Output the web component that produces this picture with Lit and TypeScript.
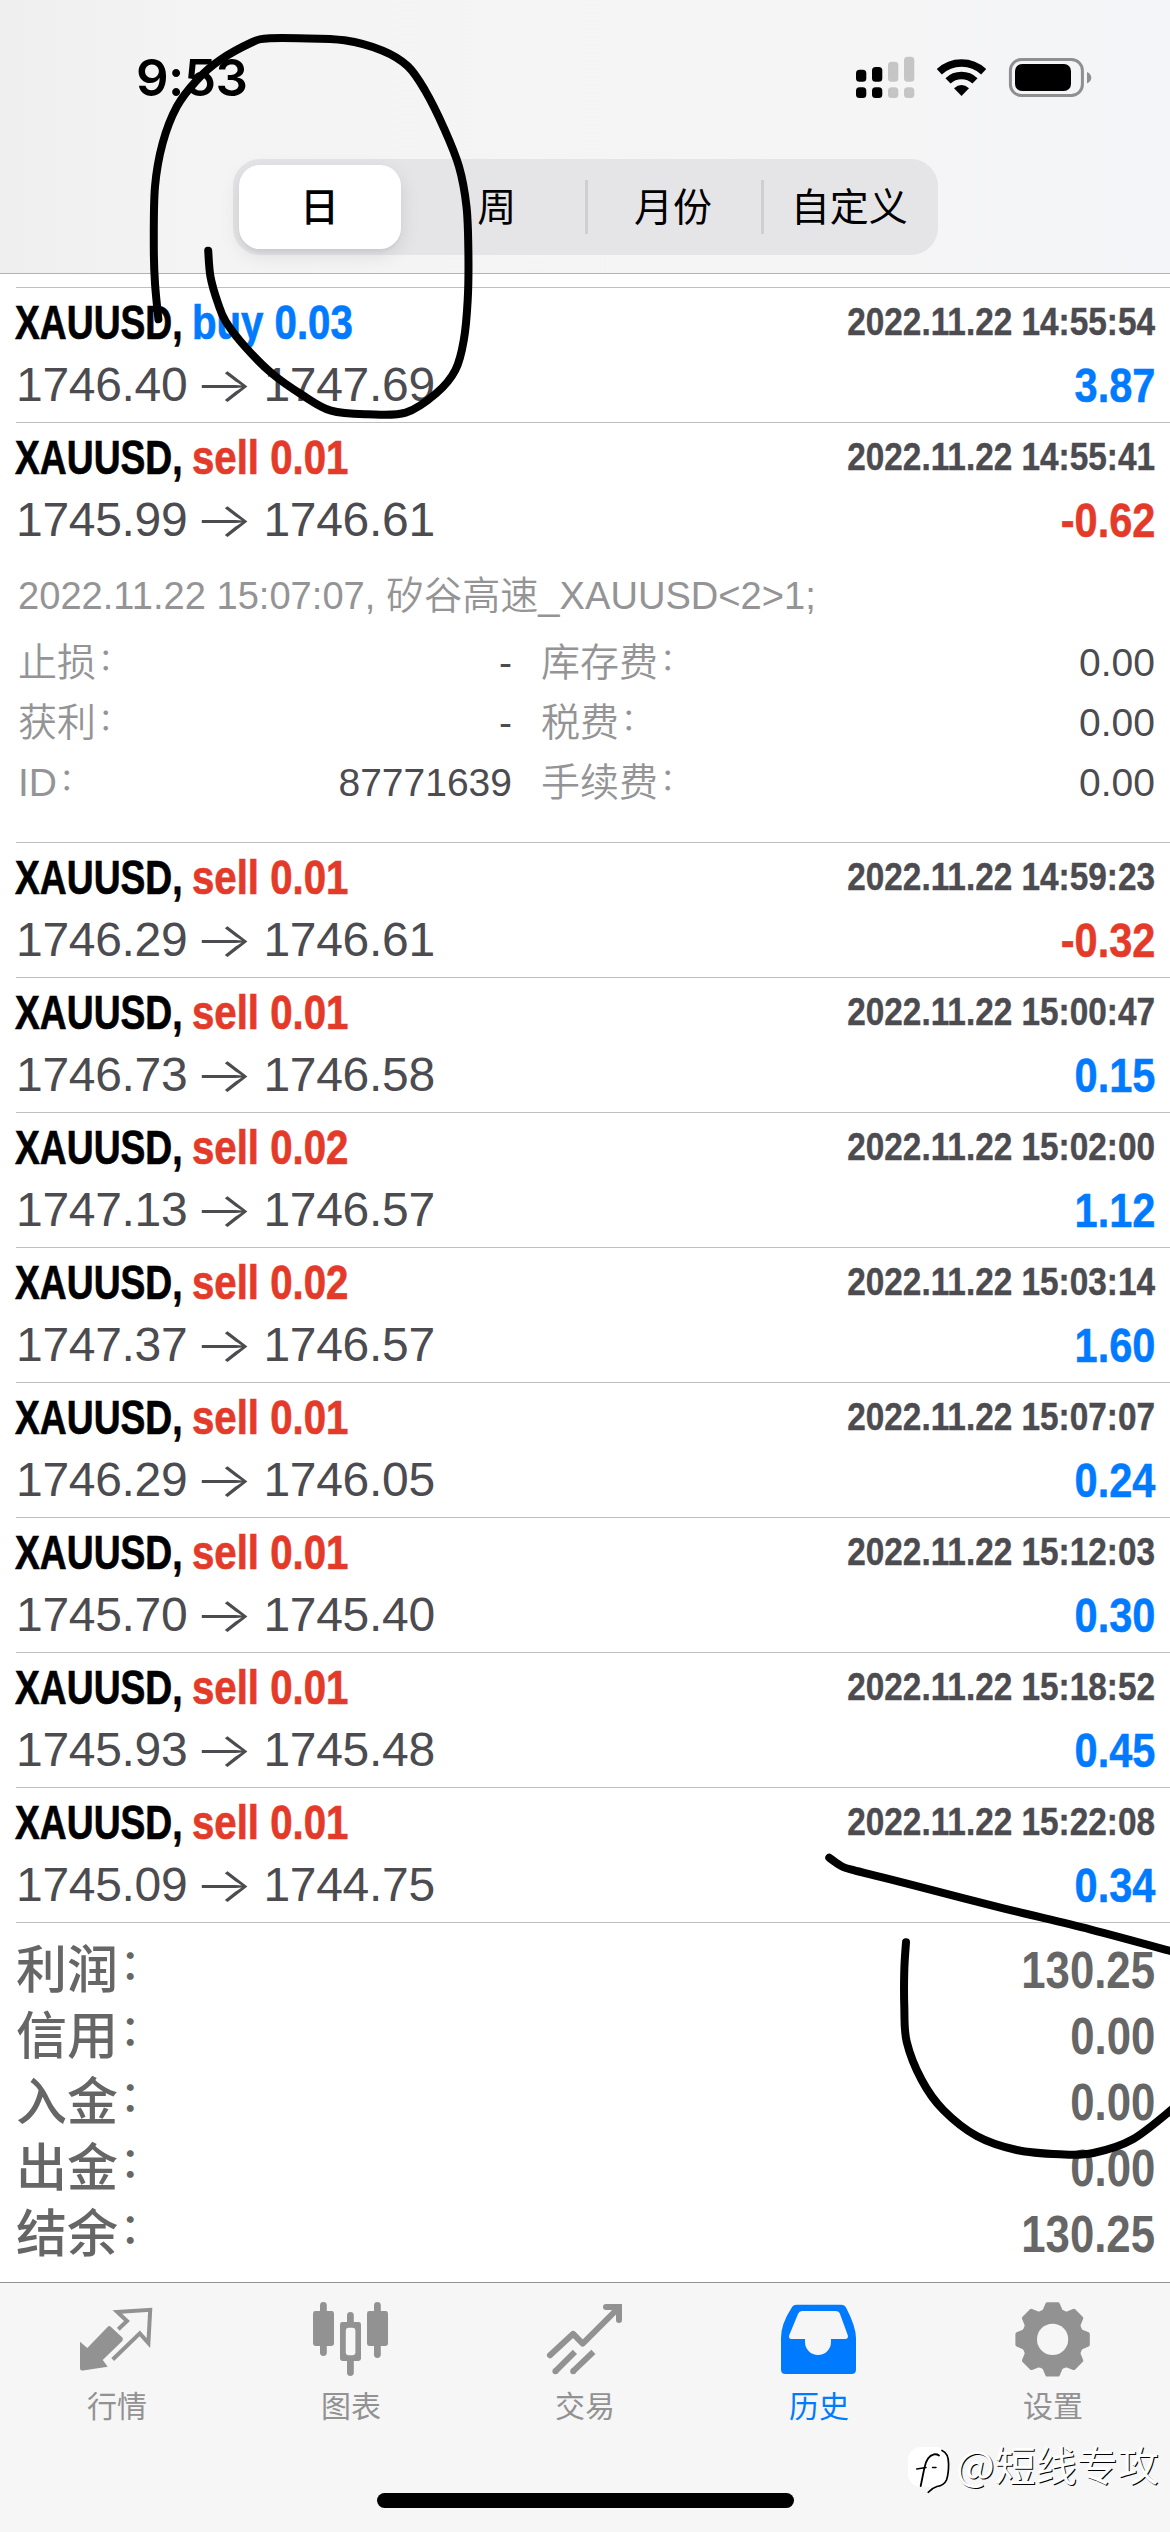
import { LitElement, html, svg, css } from "lit";
import { customElement, property } from "lit/decorators.js";

interface Deal {
  side: "buy" | "sell";
  volume: string;
  open: string;
  close: string;
  time: string;
  profit: string;
  details?: boolean;
}

const DEALS: Deal[] = [
  { side: "buy", volume: "0.03", open: "1746.40", close: "1747.69", time: "2022.11.22 14:55:54", profit: "3.87" },
  { side: "sell", volume: "0.01", open: "1745.99", close: "1746.61", time: "2022.11.22 14:55:41", profit: "-0.62", details: true },
  { side: "sell", volume: "0.01", open: "1746.29", close: "1746.61", time: "2022.11.22 14:59:23", profit: "-0.32" },
  { side: "sell", volume: "0.01", open: "1746.73", close: "1746.58", time: "2022.11.22 15:00:47", profit: "0.15" },
  { side: "sell", volume: "0.02", open: "1747.13", close: "1746.57", time: "2022.11.22 15:02:00", profit: "1.12" },
  { side: "sell", volume: "0.02", open: "1747.37", close: "1746.57", time: "2022.11.22 15:03:14", profit: "1.60" },
  { side: "sell", volume: "0.01", open: "1746.29", close: "1746.05", time: "2022.11.22 15:07:07", profit: "0.24" },
  { side: "sell", volume: "0.01", open: "1745.70", close: "1745.40", time: "2022.11.22 15:12:03", profit: "0.30" },
  { side: "sell", volume: "0.01", open: "1745.93", close: "1745.48", time: "2022.11.22 15:18:52", profit: "0.45" },
  { side: "sell", volume: "0.01", open: "1745.09", close: "1744.75", time: "2022.11.22 15:22:08", profit: "0.34" },
];

const TOTALS: [string, string][] = [
  ["利润", "130.25"],
  ["信用", "0.00"],
  ["入金", "0.00"],
  ["出金", "0.00"],
  ["结余", "130.25"],
];

type Point = [number, number];

/* Smooth path through all points (Catmull-Rom converted to cubic Béziers). */
function smooth(points: Point[]): string {
  let d = `M${points[0][0]} ${points[0][1]}`;
  for (let i = 0; i < points.length - 1; i++) {
    const p0 = points[Math.max(0, i - 1)];
    const p1 = points[i];
    const p2 = points[i + 1];
    const p3 = points[Math.min(points.length - 1, i + 2)];
    const c1 = [p1[0] + (p2[0] - p0[0]) / 6, p1[1] + (p2[1] - p0[1]) / 6];
    const c2 = [p2[0] - (p3[0] - p1[0]) / 6, p2[1] - (p3[1] - p1[1]) / 6];
    d += `C${c1[0].toFixed(1)} ${c1[1].toFixed(1)} ${c2[0].toFixed(1)} ${c2[1].toFixed(1)} ${p2[0]} ${p2[1]}`;
  }
  return d;
}

const MARKS: Point[][] = [
  [
    [158.4, 319.3], [155, 283.3], [153.8, 246.7], [155, 186.7], [162.6, 143.3], [176.8, 106.7], [197, 80],
    [220, 60], [252.6, 42], [267, 38.5], [298.5, 38.3], [344.4, 40.3], [382.7, 50.7], [407.6, 66], [424.8, 90],
    [444, 128.3], [459, 166.7], [466.5, 206.7], [468.4, 253.3], [467.7, 300], [463.8, 340], [455.4, 370],
    [436.3, 393.3], [405.7, 412.7], [367.4, 414.3], [331, 410.7], [302.3, 395], [271.7, 373.3], [245, 346.7],
    [225.8, 321.7], [218, 303.3], [210.5, 276.7], [208.2, 250.7],
  ],
  [[829.3, 1857.7], [840, 1865.2], [851.7, 1869.7], [910, 1884.3], [1003.3, 1908.3], [1090, 1929.3], [1176, 1952.5]],
  [
    [906, 1942.3], [904.3, 1970], [904.3, 2006.7], [906.7, 2041.7], [921.7, 2080], [943.3, 2110], [976.7, 2136],
    [1016.7, 2150], [1060, 2154.3], [1093.3, 2153], [1133.3, 2139], [1175, 2107],
  ],
];

function gear(): string {
  const out: string[] = [];
  const at = (deg: number, r: number) => {
    const a = (deg * Math.PI) / 180;
    return `${(39.6 + r * Math.sin(a)).toFixed(2)} ${(39.4 - r * Math.cos(a)).toFixed(2)}`;
  };
  for (let t = 0; t < 8; t++) {
    const c = t * 45;
    out.push(at(c - 20, 29), at(c - 16, 29.6), at(c - 8.5, 35.6), at(c + 8.5, 35.6), at(c + 16, 29.6), at(c + 20, 29));
  }
  return `M${out.join("L")}Z`;
}

const ICONS: Record<string, unknown> = {
  quotes: svg`
    <path d="M41.3 29.3 50 21 40.3 12 73.2 9.8 71.4 43 62.8 33.3 35.7 59.5" fill="none" stroke="currentColor" stroke-width="4" />
    <path d="M3 41.7 10.3 48 30.6 27Q32.3 25 34 27L45.3 37.6Q46.6 39.3 45.3 41L25.7 60 30.7 66.7 6 70.6Q3 70.8 3 68Z" fill="currentColor" />`,
  chart: svg`
    <g fill="currentColor">
      <rect x="9" y="2" width="6.8" height="54" rx="3.4" /><rect x="2" y="11" width="21" height="35" rx="2.4" />
      <rect x="36" y="12" width="6.8" height="64" rx="3.4" /><rect x="29" y="22" width="21" height="39" rx="2.4" />
      <rect x="63" y="2" width="6.8" height="56" rx="3.4" /><rect x="56" y="11" width="21" height="35" rx="2.4" />
    </g>
    <rect x="34.8" y="27.8" width="9.6" height="27.4" rx="3" fill="#f6f6f6" />`,
  trade: svg`
    <g fill="none" stroke="currentColor" stroke-width="6">
      <path d="M5 55.3 28.2 33.8 37.7 43.6 74 7.3" stroke-linecap="round" stroke-linejoin="round" />
      <path d="M61 7.1H74V20" stroke-linecap="round" stroke-linejoin="miter" />
      <path d="M10.3 71.3 29.9 51.9M28 71.3 48.4 51.9" />
    </g>
    <circle cx="10.4" cy="71.2" r="3" fill="currentColor" /><circle cx="28.2" cy="71.2" r="3" fill="currentColor" />`,
  history: svg`
    <path fill-rule="evenodd" fill="currentColor" d="M17.5 4.7H62Q65.500 4.700 67.300 8Q77 27 77 38V69.500Q77 74 72.500 74H6.500Q2 74 2 69.500V38Q2 24 12.500 8Q14.200 4.700 17.500 4.700ZM23.500 11Q20.300 11 19 14L10.300 35Q9.200 39 12.500 39H26V42A13 13 0 0 0 52 42V39H66Q69.800 39 68.700 35L61 14Q60 11 56.500 11Z" />`,
  settings: svg`
    <path d=${gear()} fill="currentColor" stroke="currentColor" stroke-width="4" stroke-linejoin="round" />
    <circle cx="39.600" cy="39.400" r="15.600" fill="#f6f6f6" />`,
};

@customElement("deal-row")
export class DealRow extends LitElement {
  @property({ attribute: false }) deal!: Deal;

  static styles = css`
    :host {
      display: block;
      box-sizing: border-box;
      margin-left: 16px;
      border-bottom: 1px solid #bfbfc2;
      height: 135px;
    }
    :host([expanded]) {
      height: 420px;
    }
    .head {
      box-sizing: border-box;
      height: 134px;
      padding: 9px 15px 0 0;
    }
    .line {
      display: flex;
      justify-content: space-between;
      align-items: flex-start;
      white-space: nowrap;
    }
    .line.second {
      margin-top: 11px;
    }
    .title {
      display: flex;
      font-size: 49px;
      line-height: 50px;
      font-weight: 700;
      -webkit-text-stroke: 0.7px currentColor;
    }
    .symbol {
      width: 177px;
      margin-left: -1px;
      color: #000;
      transform: scaleX(0.76);
      transform-origin: left;
    }
    .action {
      transform: scaleX(0.82);
      transform-origin: left;
    }
    .time {
      font-size: 39px;
      line-height: 49px;
      font-weight: 700;
      color: #4b4b50;
      transform: scaleX(0.855);
      transform-origin: right;
      -webkit-text-stroke: 0.4px currentColor;
    }
    .prices {
      display: flex;
      font-size: 48px;
      line-height: 54px;
      letter-spacing: -0.3px;
      color: #4b4b50;
    }
    .arrow {
      width: 77px;
      margin-right: -1px;
      text-align: center;
      font-family: "Inter", sans-serif;
      font-weight: 300;
      transform: translateX(-2px) scaleX(1.3);
    }
    .profit {
      font-size: 48px;
      line-height: 55px;
      font-weight: 700;
      transform: scaleX(0.865);
      transform-origin: right;
      -webkit-text-stroke: 0.5px currentColor;
    }
    .blue {
      color: #007aff;
    }
    .red {
      color: #e43a29;
    }
    .note {
      margin: 9px 0 0 2px;
      font-size: 39px;
      line-height: 60px;
      color: #949496;
      font-weight: 350;
      white-space: nowrap;
      transform: scaleX(0.977);
      transform-origin: left;
    }
    .grid {
      display: grid;
      grid-template-columns: 494px 614px;
      column-gap: 29px;
      margin: 7px 0 0 2px;
      font-size: 39px;
      line-height: 60px;
    }
    .pair {
      display: flex;
      justify-content: space-between;
    }
    .key {
      color: #949496;
      font-weight: 350;
    }
    .value {
      color: #4b4b50;
    }
    .colon {
      position: relative;
      top: -6px;
      margin-left: 2px;
      font-size: 31px;
      line-height: 1;
    }
  `;

  private pair(key: string, value: string) {
    return html`<div class="pair">
      <span class="key">${key}<span class="colon">：</span></span><span class="value">${value}</span>
    </div>`;
  }

  render() {
    const d = this.deal;
    return html`
      <div class="head">
        <div class="line">
          <div class="title">
            <span class="symbol">XAUUSD,</span>
            <span class="action ${d.side === "buy" ? "blue" : "red"}">${d.side} ${d.volume}</span>
          </div>
          <span class="time">${d.time}</span>
        </div>
        <div class="line second">
          <div class="prices"><span>${d.open}</span><span class="arrow">→</span><span>${d.close}</span></div>
          <span class="profit ${d.profit.startsWith("-") ? "red" : "blue"}">${d.profit}</span>
        </div>
      </div>
      ${d.details
        ? html`
            <div class="note">2022.11.22 15:07:07, 矽谷高速_XAUUSD&lt;2&gt;1;</div>
            <div class="grid">
              ${this.pair("止损", "-")}${this.pair("库存费", "0.00")}
              ${this.pair("获利", "-")}${this.pair("税费", "0.00")}
              ${this.pair("ID", "87771639")}${this.pair("手续费", "0.00")}
            </div>
          `
        : ""}
    `;
  }
}

@customElement("app-root")
export class AppRoot extends LitElement {
  static styles = css`
    :host {
      display: block;
      position: relative;
      width: 1170px;
      height: 2532px;
      overflow: hidden;
      background: #fff;
      font-family: "Liberation Sans", "Noto Sans CJK SC", sans-serif;
    }
    .screen {
      display: flex;
      flex-direction: column;
      height: 100%;
    }
    .header {
      box-sizing: border-box;
      height: 274px;
      border-bottom: 1px solid #b2b2b4;
      background: linear-gradient(90deg, #efeff0 0, #f4f4f5 200px, #f5f5f5 800px, #f4f5f8 1170px);
      display: flex;
      flex-direction: column;
      align-items: center;
    }
    .status {
      align-self: stretch;
      box-sizing: border-box;
      height: 159px;
      padding: 48px 78px 0 136px;
      display: flex;
      justify-content: space-between;
      align-items: flex-start;
    }
    .clock {
      font-family: "Inter", sans-serif;
      font-weight: 600;
      font-size: 51px;
      line-height: 60px;
      letter-spacing: -0.5px;
    }
    .indicators {
      display: block;
      width: 240px;
      height: 60px;
    }
    .segments {
      box-sizing: border-box;
      width: 705px;
      height: 96px;
      border-radius: 27px;
      background: #e5e5e7;
      display: grid;
      grid-template-columns: repeat(4, 1fr);
      align-items: center;
      font-size: 39px;
      line-height: 85px;
      text-align: center;
      color: #000;
    }
    .segment.selected {
      margin: 0 8px 0 6px;
      height: 84px;
      border-radius: 21px;
      background: #fff;
      font-weight: 500;
      box-shadow: 0 6px 20px rgba(0, 0, 0, 0.1), 0 3px 3px rgba(0, 0, 0, 0.04);
    }
    .segment.ruled {
      background: linear-gradient(#cfcfd2, #cfcfd2) left center / 3px 54px no-repeat;
    }
    .list {
      flex: none;
      padding-top: 13px;
    }
    .top-rule {
      height: 1px;
      margin-left: 16px;
      background: #bfbfc2;
    }
    .totals {
      flex: 1;
      padding: 15px 15px 0 16px;
      font-size: 51px;
      line-height: 66px;
      font-weight: 700;
      color: #666;
    }
    .total {
      display: flex;
      justify-content: space-between;
    }
    .label {
      font-weight: 500;
    }
    .amount {
      transform: scaleX(0.857);
      transform-origin: right;
    }
    .colon {
      position: relative;
      top: -9px;
      margin-left: 2px;
      font-size: 41px;
      line-height: 1;
    }
    .tabbar {
      box-sizing: border-box;
      height: 250px;
      border-top: 1px solid #939395;
      background: #f6f6f6;
      display: flex;
      flex-direction: column;
      align-items: center;
    }
    .tabs {
      align-self: stretch;
      height: 210px;
      display: grid;
      grid-template-columns: repeat(5, 1fr);
    }
    .tab {
      display: flex;
      flex-direction: column;
      align-items: center;
      padding-top: 17px;
      color: #929292;
      font-size: 30px;
      line-height: 40px;
    }
    .tab.active {
      color: #007aff;
    }
    .tab svg {
      display: block;
      width: 80px;
      height: 80px;
      margin-bottom: 7px;
    }
    .home {
      width: 417px;
      height: 15px;
      border-radius: 8px;
      background: #000;
    }
    .marks {
      position: absolute;
      inset: 0;
      width: 1170px;
      height: 2532px;
      fill: none;
      stroke: #000;
      stroke-width: 8;
      stroke-linecap: round;
      stroke-linejoin: round;
      pointer-events: none;
    }
    .watermark {
      position: absolute;
      left: 906px;
      top: 2433px;
      display: flex;
      align-items: flex-start;
      font-size: 41px;
      line-height: 60px;
      color: #fff;
      white-space: nowrap;
      font-family: "Noto Sans CJK SC", sans-serif;
      font-weight: 400;
      text-shadow: 1px 1px 0 #000;
    }
    .watermark svg {
      width: 50px;
      height: 60px;
      margin-top: 3px;
    }
  `;

  private tab(icon: string, label: string, active = false) {
    return html`<div class="tab ${active ? "active" : ""}">
      <svg viewBox="0 0 80 80">${ICONS[icon]}</svg><span>${label}</span>
    </div>`;
  }

  render() {
    return html`
      <div class="screen">
        <div class="header">
          <div class="status">
            <span class="clock">9:53</span>
            <svg class="indicators" viewBox="852 48 240 60">
              <rect x="856" y="69.700" width="10.300" height="12" rx="3.500" />
              <rect x="872" y="67" width="10.300" height="14.700" rx="3.500" />
              <rect x="856" y="87.300" width="10.300" height="10.700" rx="3.500" />
              <rect x="872" y="87.300" width="10.300" height="10.700" rx="3.500" />
              <g fill="#c5c5c6">
                <rect x="888" y="61.700" width="10.300" height="20" rx="3.500" />
                <rect x="904" y="56.700" width="10.300" height="25" rx="3.500" />
                <rect x="888" y="87.300" width="10.300" height="10.700" rx="3.500" />
                <rect x="904" y="87.300" width="10.300" height="10.700" rx="3.500" />
              </g>
              <g fill="none" stroke="#000" stroke-width="7.400">
                <path d="M939.300 71.800A32.500 32.500 0 0 1 983.700 71.800" />
                <path d="M948 80.900A19.600 19.600 0 0 1 975 80.900" />
              </g>
              <path d="M961.500 96 954 88.300Q961.500 81.500 969 88.300Z" />
              <rect x="1010.400" y="59.500" width="72" height="36" rx="11" fill="none" stroke="#8f8f91" stroke-width="3" />
              <rect x="1015" y="64" width="56" height="27" rx="7" />
              <path d="M1087 72Q1091.300 74 1091.300 77.700T1087 83.400Z" fill="#8f8f91" />
            </svg>
          </div>
          <div class="segments">
            <div class="segment selected">日</div>
            <div class="segment">周</div>
            <div class="segment ruled">月份</div>
            <div class="segment ruled">自定义</div>
          </div>
        </div>
        <div class="list">
          <div class="top-rule"></div>
          ${DEALS.map((d) => html`<deal-row .deal=${d} ?expanded=${!!d.details}></deal-row>`)}
        </div>
        <div class="totals">
          ${TOTALS.map(
            ([k, v]) => html`<div class="total">
              <span class="label">${k}<span class="colon">：</span></span><span class="amount">${v}</span>
            </div>`
          )}
        </div>
        <div class="tabbar">
          <div class="tabs">
            ${this.tab("quotes", "行情")}${this.tab("chart", "图表")}${this.tab("trade", "交易")}
            ${this.tab("history", "历史", true)}${this.tab("settings", "设置")}
          </div>
          <div class="home"></div>
        </div>
      </div>
      <svg class="marks" viewBox="0 0 1170 2532">${MARKS.map((m) => svg`<path d=${smooth(m)} />`)}</svg>
      <div class="watermark">
        <svg viewBox="-2 -11 50 60">
          <rect x="0" y="0" width="41" height="40" rx="13" fill="#fff" />
          <path d="M20 45.500 24 38 34 38Z" fill="#fff" />
          <g fill="none" stroke="#000" stroke-linecap="round">
            <path d="M12.700 39 16.300 21.300Q18.500 9 26 7.300 29 7 31 8.500" stroke-width="1.800" />
            <path d="M8.700 22 18 20.600M24.500 20.600H28" stroke-width="1.500" />
            <path d="M34 3.500Q40.500 6 40.600 17 40.600 27 38.500 33 36 38.500 29 39.500 24 41 20.300 45.300" stroke-width="1.700" />
          </g>
        </svg>
        <span>@短线专攻</span>
      </div>
    `;
  }
}
